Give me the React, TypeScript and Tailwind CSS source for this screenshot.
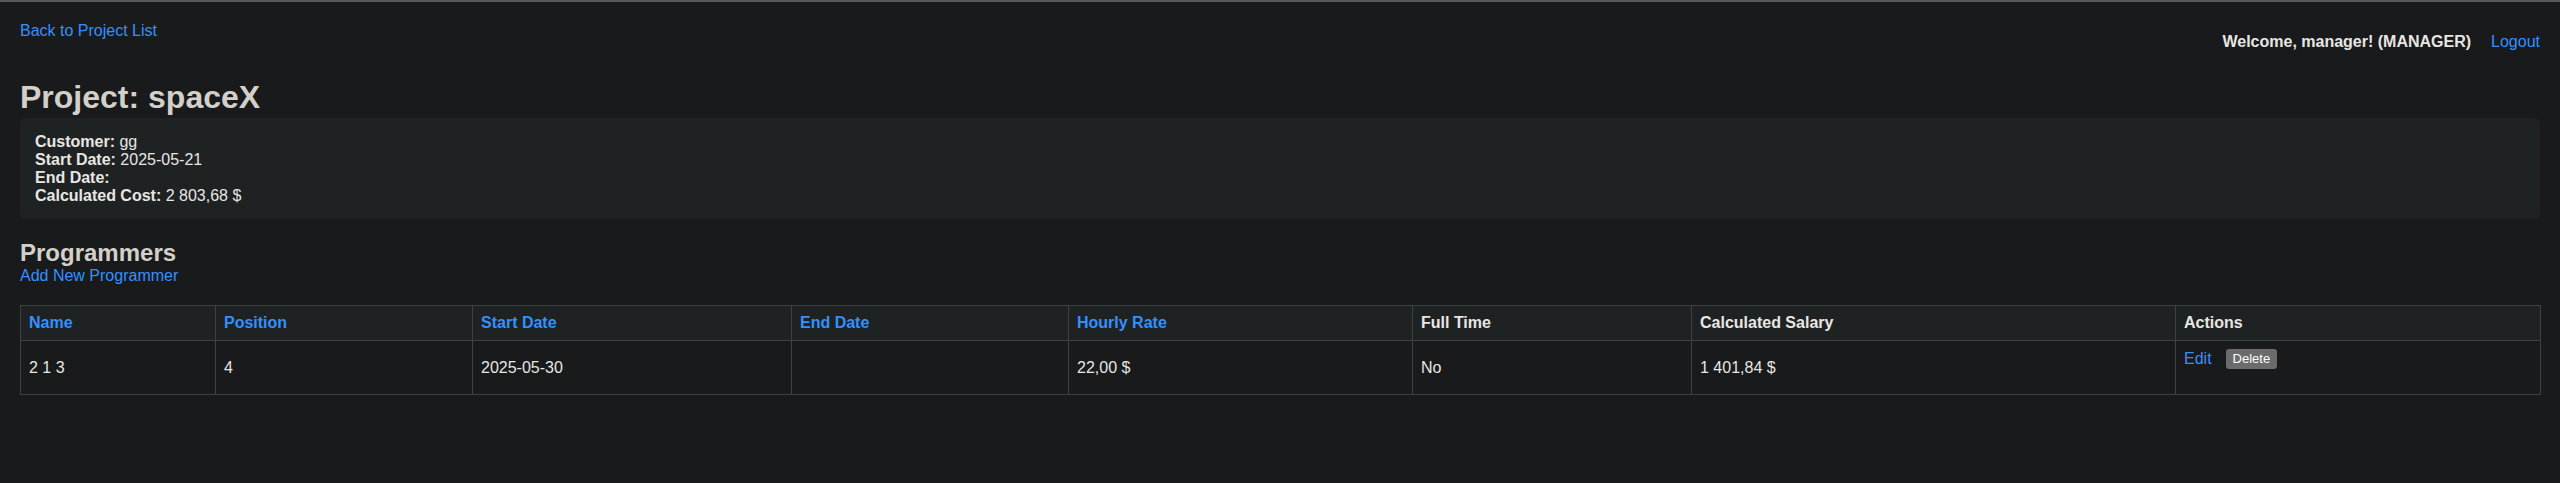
const link = "text-[#3391ff] hover:underline";

const columns = [
  { label: "Name", w: "w-[195px]", sortable: true },
  { label: "Position", w: "w-[257px]", sortable: true },
  { label: "Start Date", w: "w-[319px]", sortable: true },
  { label: "End Date", w: "w-[277px]", sortable: true },
  { label: "Hourly Rate", w: "w-[344px]", sortable: true },
  { label: "Full Time", w: "w-[279px]", sortable: false },
  { label: "Calculated Salary", w: "w-[484px]", sortable: false },
  { label: "Actions", w: "w-[365px]", sortable: false },
];

const programmers = [
  {
    name: "2 1 3",
    position: "4",
    startDate: "2025-05-30",
    endDate: "",
    rate: "22,00 $",
    fullTime: "No",
    salary: "1 401,84 $",
  },
];

export default function App() {
  return (
    <div className="min-h-[483px] bg-[#181a1b] border-t-2 border-[#5a5a5a] px-5 pt-[20px] text-[16px] leading-[18px] text-[#e8e6e3] font-['Liberation_Sans',Arial,sans-serif]">
      <div className="flex justify-between items-start">
        <a href="#" className={link}>Back to Project List</a>
        <div className="mt-[11px] flex items-center gap-5">
          <span className="font-bold">Welcome, manager! (MANAGER)</span>
          <a href="#" className={link}>Logout</a>
        </div>
      </div>

      <h1 className="mt-[28px] text-[32px] leading-[37px] font-bold text-[#d3cfc9]">Project: spaceX</h1>

      <div className="mt-[2px] rounded-[5px] bg-[#1f2223] px-[15px] pt-[15px] pb-[14px]">
        <div><b>Customer:</b> gg</div>
        <div><b>Start Date:</b> 2025-05-21</div>
        <div><b>End Date:</b> </div>
        <div><b>Calculated Cost:</b> 2 803,68 $</div>
      </div>

      <h2 className="mt-[20px] text-[24px] leading-[28px] font-bold text-[#d3cfc9]">Programmers</h2>
      <a href="#" className={link}>Add New Programmer</a>

      <table className="mt-[20px] w-[2520px] table-fixed border-collapse">
        <colgroup>
          {columns.map((c) => (
            <col key={c.label} className={c.w} />
          ))}
        </colgroup>
        <thead>
          <tr className="bg-[#1f2223]">
            {columns.map((c) => (
              <th
                key={c.label}
                className={`border border-[#3e4244] px-2 py-2 text-left font-bold ${c.sortable ? "text-[#3391ff]" : "text-[#e8e6e3]"}`}
              >
                {c.label}
              </th>
            ))}
          </tr>
        </thead>
        <tbody>
          {programmers.map((p) => (
            <tr key={p.name} className="h-[54px]">
              <td className="border border-[#3e4244] px-2 align-middle">{p.name}</td>
              <td className="border border-[#3e4244] px-2 align-middle">{p.position}</td>
              <td className="border border-[#3e4244] px-2 align-middle">{p.startDate}</td>
              <td className="border border-[#3e4244] px-2 align-middle">{p.endDate}</td>
              <td className="border border-[#3e4244] px-2 align-middle">{p.rate}</td>
              <td className="border border-[#3e4244] px-2 align-middle">{p.fullTime}</td>
              <td className="border border-[#3e4244] px-2 align-middle">{p.salary}</td>
              <td className="border border-[#3e4244] px-2 pt-2 align-top">
                <div className="flex items-center">
                  <a href="#" className={link}>Edit</a>
                  <button className="ml-[14px] h-5 rounded-[3px] bg-[#6b6b6b] px-[7px] text-[13px] leading-5 text-white">
                    Delete
                  </button>
                </div>
              </td>
            </tr>
          ))}
        </tbody>
      </table>
    </div>
  );
}
